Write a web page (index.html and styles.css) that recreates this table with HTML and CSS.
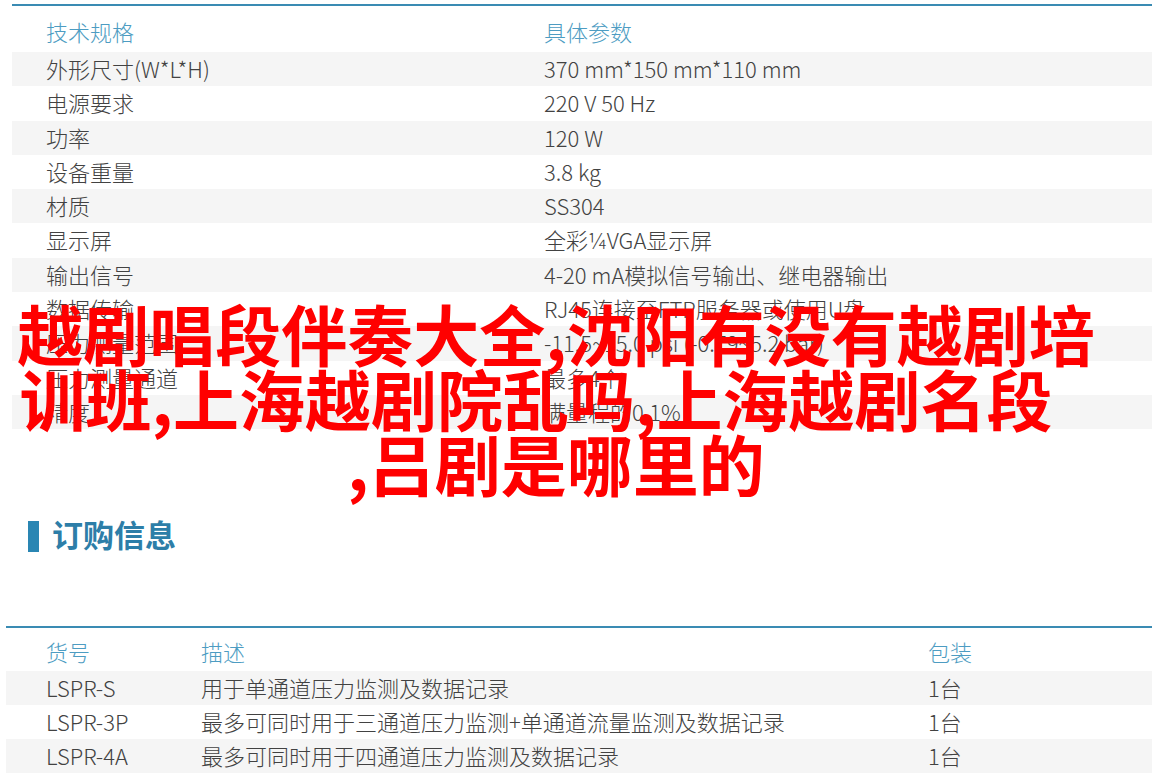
FILE: index.html
```html
<!DOCTYPE html>
<html lang="zh-CN">
<head>
  <meta charset="UTF-8">
  <meta name="viewport" content="width=device-width, initial-scale=1">
  <title>越剧唱段伴奏大全</title>
  <link rel="stylesheet" href="styles.css">
</head>
<body>

  <div class="spec">
    <div class="spec-head">
      <div>技术规格</div>
      <div>具体参数</div>
    </div>
    <div class="spec-row"><div>外形尺寸(W*L*H)</div><div>370 mm*150 mm*110 mm</div></div>
    <div class="spec-row"><div>电源要求</div><div>220 V 50 Hz</div></div>
    <div class="spec-row"><div>功率</div><div>120 W</div></div>
    <div class="spec-row"><div>设备重量</div><div>3.8 kg</div></div>
    <div class="spec-row"><div>材质</div><div>SS304</div></div>
    <div class="spec-row"><div>显示屏</div><div>全彩¼VGA显示屏</div></div>
    <div class="spec-row"><div>输出信号</div><div>4-20 mA模拟信号输出、继电器输出</div></div>
    <div class="spec-row"><div>数据传输</div><div>RJ45连接至FTP服务器或使用U盘</div></div>
    <div class="spec-row"><div>压力测量范围</div><div>-11.5~15.0 psi (-0.79~5.2 bar)</div></div>
    <div class="spec-row"><div>压力测量通道</div><div>最多4个</div></div>
    <div class="spec-row"><div>精度</div><div>满量程的0.1%</div></div>
  </div>

  <h2 class="section-title"><span class="bar"></span><span class="title-text">订购信息</span></h2>

  <div class="order">
    <div class="order-head">
      <div>货号</div>
      <div>描述</div>
      <div>包装</div>
    </div>
    <div class="order-row"><div>LSPR-S</div><div>用于单通道压力监测及数据记录</div><div>1台</div></div>
    <div class="order-row"><div>LSPR-3P</div><div>最多可同时用于三通道压力监测+单通道流量监测及数据记录</div><div>1台</div></div>
    <div class="order-row"><div>LSPR-4A</div><div>最多可同时用于四通道压力监测及数据记录</div><div>1台</div></div>
  </div>

  <div class="headline">
    <div>越剧唱段伴奏大全,沈阳有没有越剧培</div>
    <div class="shift">训班,上海越剧院乱吗,上海越剧名段</div>
    <div>,吕剧是哪里的</div>
  </div>

</body>
</html>
```

FILE: styles.css
```css
body {
  margin: 0;
  font-family: "Noto Sans CJK SC", "Noto Sans", sans-serif;
  font-weight: 300;
  color: #424242;
  background: #fff;
  position: relative;
  overflow: hidden;
}

/* spec table */
.spec {
  margin: 4px 3px 0 12px;
  border-top: 2px solid #3a8bb3;
  font-size: 22px;
}

.spec-head,
.spec-row {
  display: grid;
  grid-template-columns: 532px 1fr;
  align-items: center;
  box-sizing: border-box;
}

.spec-head > div,
.spec-row > div {
  padding-left: 34px;
}

.spec-row > div:last-child,
.spec-head > div:last-child {
  padding-left: 0;
}

.spec-head {
  height: 46px;
  padding-top: 6px;
  padding-bottom: 2px;
  color: #4d9cc2;
}

.spec-row {
  height: 34.3px;
  padding-bottom: 8px;
}

.spec-row:nth-child(even) {
  background: #f5f5f5;
}

/* heading */
.section-title {
  display: flex;
  align-items: center;
  gap: 13px;
  margin: 91px 0 0 28px;
  height: 32px;
  font-size: 31px;
  font-weight: 700;
  color: #2d7ea8;
}

.title-text {
  padding-bottom: 5px;
}

.bar {
  width: 11px;
  height: 31px;
  background: #2a86b3;
}

/* order table */
.order {
  margin: 74px 3px 0 6px;
  border-top: 2px solid #3a8bb3;
  font-size: 22px;
}

.order-head,
.order-row {
  display: grid;
  grid-template-columns: 195px 727px 1fr;
  align-items: center;
  box-sizing: border-box;
}

.order-head > div:first-child,
.order-row > div:first-child {
  padding-left: 40px;
}

.order-head {
  height: 43px;
  padding-top: 4px;
  padding-bottom: 2px;
  color: #4d9cc2;
}

.order-row {
  height: 34px;
  padding-bottom: 9px;
}

.order-row:nth-child(even) {
  background: #f5f5f5;
}

/* red title laid over the page */
.headline {
  position: absolute;
  top: 300px;
  left: 0;
  width: 1112px;
  text-align: center;
  font-size: 66px;
  line-height: 65px;
  font-weight: 700;
  color: #ff0000;
}

.shift {
  padding-right: 40px;
}
```
